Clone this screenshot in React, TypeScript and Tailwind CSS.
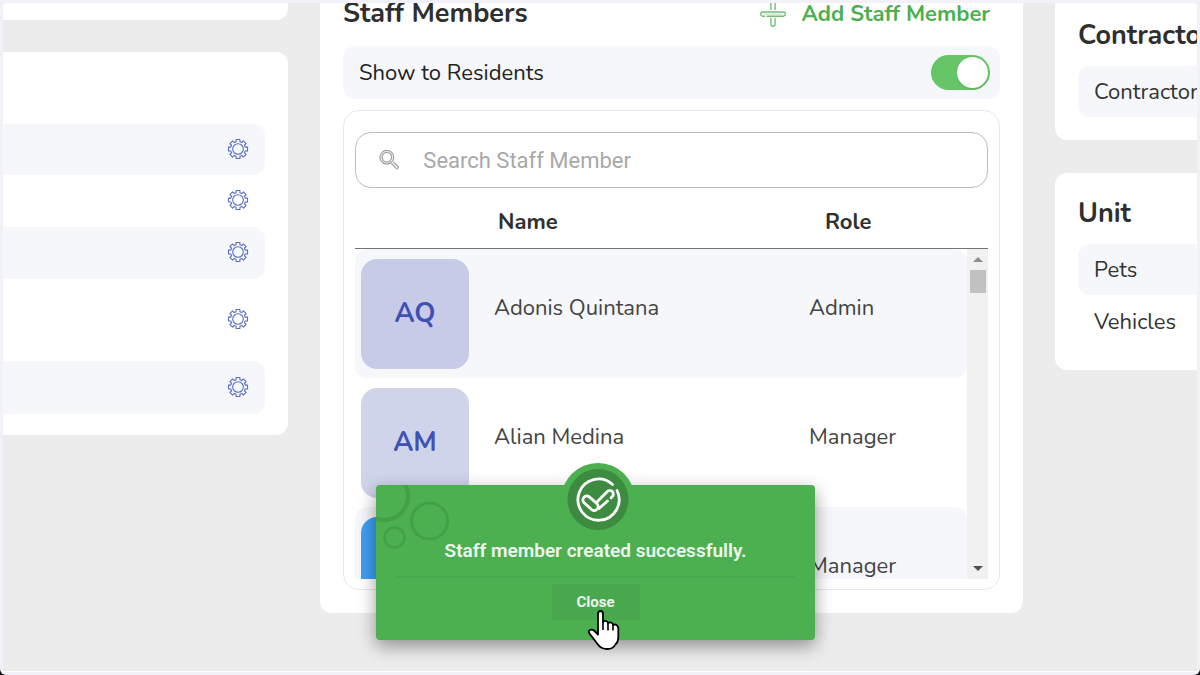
import { useState } from 'react';
import clsx from 'clsx';

type Staff = {
  initials: string;
  name: string;
  role: string;
  avatar: string;
};

const staff: Staff[] = [
  { initials: 'AQ', name: 'Adonis Quintana', role: 'Admin', avatar: 'bg-[#c8cbe8]' },
  { initials: 'AM', name: 'Alian Medina', role: 'Manager', avatar: 'bg-[#cfd4ea]' },
  { initials: '', name: '', role: 'Manager', avatar: 'bg-[#3f9ef0]' },
];

const settingRows = ['h-[51px]', 'h-[52px]', 'h-[52px]', 'h-[82px]', 'h-[53px]'];

function GearIcon() {
  return (
    <svg viewBox="0 0 24 24" className="size-[22px]" fill="none" stroke="#5b6fbd" strokeWidth="1.2" strokeLinejoin="round">
      <circle cx="12" cy="12" r="5.8" />
      <path d="M9.9 1.6h4.2v2.5l2 .9 1.8-1.8 2.9 2.9L19 7.9l.9 2h2.5v4.2h-2.5l-.9 2 1.8 1.8-2.9 2.9-1.8-1.8-2 .9v2.5H9.9v-2.5l-2-.9-1.8 1.8-2.9-2.9L5 16.1l-.9-2H1.6V9.9h2.5l.9-2-1.8-1.8 2.9-2.9L7.9 5l2-.9z" />
    </svg>
  );
}

function PlusIcon() {
  return (
    <svg viewBox="0 0 26 26" className="size-[26px]" fill="none" stroke="#74bd7a" strokeWidth="1.4" strokeLinecap="round">
      <path d="M4.5 15.2H2.8a2 2 0 0 1 0-4.2h20.4a2.1 2.1 0 0 1 0 4.2H7" />
      <path d="M10.9 8.5V2.8a2.1 2.1 0 0 1 4.2 0v5.7M10.9 17.5v5.7a2.1 2.1 0 0 0 4.2 0v-5.7" />
      <path d="M4 13.1h18" stroke="#b5ddb8" strokeWidth="1" />
    </svg>
  );
}

function SearchIcon() {
  return (
    <svg viewBox="0 0 22 22" className="size-[22px]" fill="none" stroke="#a3a3a3" strokeWidth="1.4" strokeLinejoin="round">
      <circle cx="8.5" cy="8" r="7.4" />
      <circle cx="8.5" cy="8" r="5.2" />
      <path d="M13.5 14.8l4.8 5a1.3 1.3 0 0 0 2-2l-4.8-4.7" />
    </svg>
  );
}

function CheckBadge() {
  return (
    <svg viewBox="0 0 74 74" className="size-[74px]" fill="none">
      <circle cx="37" cy="37" r="37" fill="#4caf50" />
      <circle cx="37" cy="36.500" r="30.5" fill="#3d8b40" />
      <g stroke="#fff" strokeWidth="2.8" strokeLinecap="round" strokeLinejoin="round">
        <path d="M51.5 21.5A20.6 20.6 0 1 0 56 27.5" />
        <path d="M35 39.7 28.3 33.9a3.9 3.9 0 0 0-5.4 5.6l7.6 7a4 4 0 0 0 5.5-5.8z" />
        <path d="M36.5 38.500 46.3 28.600a3.5 3.5 0 0 1 5 5l-1.3 1.3" />
        <path d="M38 45.500l8.500-7.500" />
      </g>
    </svg>
  );
}

function Bubbles() {
  return (
    <svg viewBox="0 0 80 70" className="absolute top-0 left-0 h-[70px] w-20" fill="none" stroke="#43a047">
      <circle cx="8" cy="11" r="24" strokeWidth="4" />
      <circle cx="53.5" cy="36" r="18" strokeWidth="3" />
      <circle cx="18.5" cy="52.5" r="10" strokeWidth="2.5" />
    </svg>
  );
}

function HandCursor() {
  return (
    <svg viewBox="0 0 32 40" className="pointer-events-none absolute top-[125px] left-[212px] h-10 w-8">
      <path
        d="M10 4q0-3 2.5-3T15 4v8q1-1.500 3-1t2 2q2-1 3.500-.2T25 15q2-1 3.500 0t1.800 3v9q0 5-3 7.500-2 4.500-8 4.500-6 0-9-4L1.500 23.500Q0 21 2 20t4 .5l4 4z"
        fill="#fff"
        stroke="#000"
        strokeWidth="1.8"
        strokeLinejoin="round"
      />
      <path d="M15 11v9M20 13v7.5M25 15v5.5" stroke="#000" strokeWidth="1.6" />
    </svg>
  );
}

function StaffTable() {
  return (
    <div className="relative">
      <table className="block">
        <thead className="block border-b border-[#757575]">
          <tr className="grid h-[60px] grid-cols-[139px_315px_1fr] items-center pt-2 text-left text-[22px] text-[#2f2f2f]">
            <th aria-label="Avatar" />
            <th className="pl-1 font-bold">Name</th>
            <th className="pl-4 font-bold">Role</th>
          </tr>
        </thead>
        <tbody className="block h-[330px] overflow-hidden pr-[21px]">
          {staff.map((person, i) => (
            <tr
              key={i}
              className={clsx('grid h-[129px] grid-cols-[139px_315px_1fr] rounded-xl', i % 2 === 0 && 'bg-[#f5f7fb]')}
            >
              <td className="px-[6px] pt-[10px]">
                <div
                  className={clsx(
                    'flex h-[110px] w-[108px] items-center justify-center rounded-2xl text-[27px] font-bold text-[#3f51b5]',
                    person.avatar
                  )}
                >
                  {person.initials}
                </div>
              </td>
              <td className="self-center pb-[10px] text-[22px] text-[#444]">{person.name}</td>
              <td className="self-center pb-[10px] text-[22px] text-[#444]">{person.role}</td>
            </tr>
          ))}
        </tbody>
      </table>
      {/* scrollbar */}
      <div className="absolute right-0 bottom-0 flex h-[330px] w-[21px] flex-col items-center bg-[#f1f1f1] pt-2 pb-2">
        <span className="border-x-5 border-b-5 border-x-transparent border-b-[#8f8f8f]" />
        <span className="mt-2 h-[23px] w-4 bg-[#c1c1c1]" />
        <span className="mt-auto border-x-5 border-t-5 border-x-transparent border-t-[#505050]" />
      </div>
    </div>
  );
}

function Toast({ onClose }: { onClose: () => void }) {
  return (
    <div
      role="alert"
      className="relative flex h-[155px] w-[439px] flex-col items-center rounded bg-[#4caf50] px-5 pt-[54px] font-['Roboto',sans-serif] text-white shadow-[0_6px_18px_rgba(0,0,0,0.4)]"
    >
      <Bubbles />
      <div className="absolute -top-[22px] left-[185px]">
        <CheckBadge />
      </div>
      <p className="text-[19px] leading-6 font-semibold text-white/90">Staff member created successfully.</p>
      <div className="mt-[13px] h-[2px] w-full bg-[#48a64c]" />
      <button onClick={onClose} className="mt-[6px] h-9 w-[88px] rounded bg-[#49a84d] text-[15px] font-bold text-white/90">
        Close
      </button>
      <HandCursor />
    </div>
  );
}

export default function App() {
  const [visible, setVisible] = useState(true);
  const [showToResidents, setShowToResidents] = useState(true);

  return (
    <div className="h-screen bg-black font-['Nunito','Open_Sans',sans-serif]">
      <div className="h-full overflow-hidden rounded-b-md bg-[#f2f1f8] p-[3px]">
        <main className="relative flex h-full items-start gap-8 overflow-hidden rounded-t border-b border-white bg-[#ececec]">
          <div className="w-[285px] shrink-0">
            <div className="h-[17px] rounded-br-xl bg-white" />
            <section className="mt-8 rounded-r-xl bg-white pt-[72px] pr-[23px] pb-[21px]">
              {settingRows.map((height, i) => (
                <div
                  key={i}
                  className={clsx(
                    'flex items-center justify-end rounded-r-xl pr-4 pb-0.5',
                    height,
                    i % 2 === 0 && 'bg-[#f5f7fb]'
                  )}
                >
                  <button aria-label="Settings">
                    <GearIcon />
                  </button>
                </div>
              ))}
            </section>
          </div>

          <section className="min-w-0 flex-1 rounded-b-xl bg-white px-[23px] pb-[23px]">
            <div className="flex h-[43px] items-start justify-between pr-[10px]">
              <h2 className="text-[27px] leading-[22px] font-bold text-[#2f2f2f]">Staff Members</h2>
              <button className="flex items-center gap-4 text-[22px] leading-[22px] font-bold text-[#4caf50]">
                <span className="-my-1">
                  <PlusIcon />
                </span>
                Add Staff Member
              </button>
            </div>

            <label className="flex h-[53px] items-center justify-between rounded-xl bg-[#f5f7fb] pr-[10px] pl-4 text-[22px] text-[#222]">
              <span className="pt-0.5">Show to Residents</span>
              <input
                type="checkbox"
                checked={showToResidents}
                onChange={(e) => setShowToResidents(e.target.checked)}
                className="flex h-[35px] w-[59px] appearance-none items-center rounded-full bg-gray-300 px-[2px] before:size-[31px] before:rounded-full before:bg-white before:shadow checked:justify-end checked:bg-[#66c566]"
              />
            </label>

            <div className="mt-[11px] rounded-2xl border border-[#e9e9ec] px-[11px] pt-[21px] pb-[10px]">
              <label className="flex h-[56px] items-center gap-6 rounded-2xl border border-[#bdbdbd] px-[23px]">
                <SearchIcon />
                <input
                  type="text"
                  aria-label="Search Staff Member"
                  placeholder="Search Staff Member"
                  className="w-full bg-transparent font-['Roboto',sans-serif] text-[22px] outline-none placeholder:text-[#a8a8a8]"
                />
              </label>
              <StaffTable />
            </div>
          </section>

          <div className="w-[142px] shrink-0 whitespace-nowrap">
            <section className="overflow-hidden rounded-bl-xl bg-white pt-[17px] pb-[23px] pl-[23px]">
              <h2 className="h-[46px] text-[27px] leading-8 font-bold text-[#2f2f2f]">Contractors</h2>
              <div className="flex h-[51px] items-center rounded-l-xl bg-[#f5f7fb] pt-0.5 pl-4 text-[22px] text-[#333]">
                Contractors
              </div>
            </section>
            <section className="mt-[33px] overflow-hidden rounded-l-xl bg-white pt-[25px] pb-[23px] pl-[23px]">
              <h2 className="h-[46px] text-[27px] leading-8 font-bold text-[#2f2f2f]">Unit</h2>
              <div className="flex h-[51px] items-center rounded-l-xl bg-[#f5f7fb] pt-0.5 pl-4 text-[22px] text-[#333]">
                Pets
              </div>
              <div className="flex h-[52px] items-center pt-0.5 pl-4 text-[22px] text-[#333]">Vehicles</div>
            </section>
          </div>

          {visible && (
            <div className="absolute inset-x-0 bottom-[31px] flex justify-center pr-[9px]">
              <Toast onClose={() => setVisible(false)} />
            </div>
          )}
        </main>
      </div>
    </div>
  );
}
